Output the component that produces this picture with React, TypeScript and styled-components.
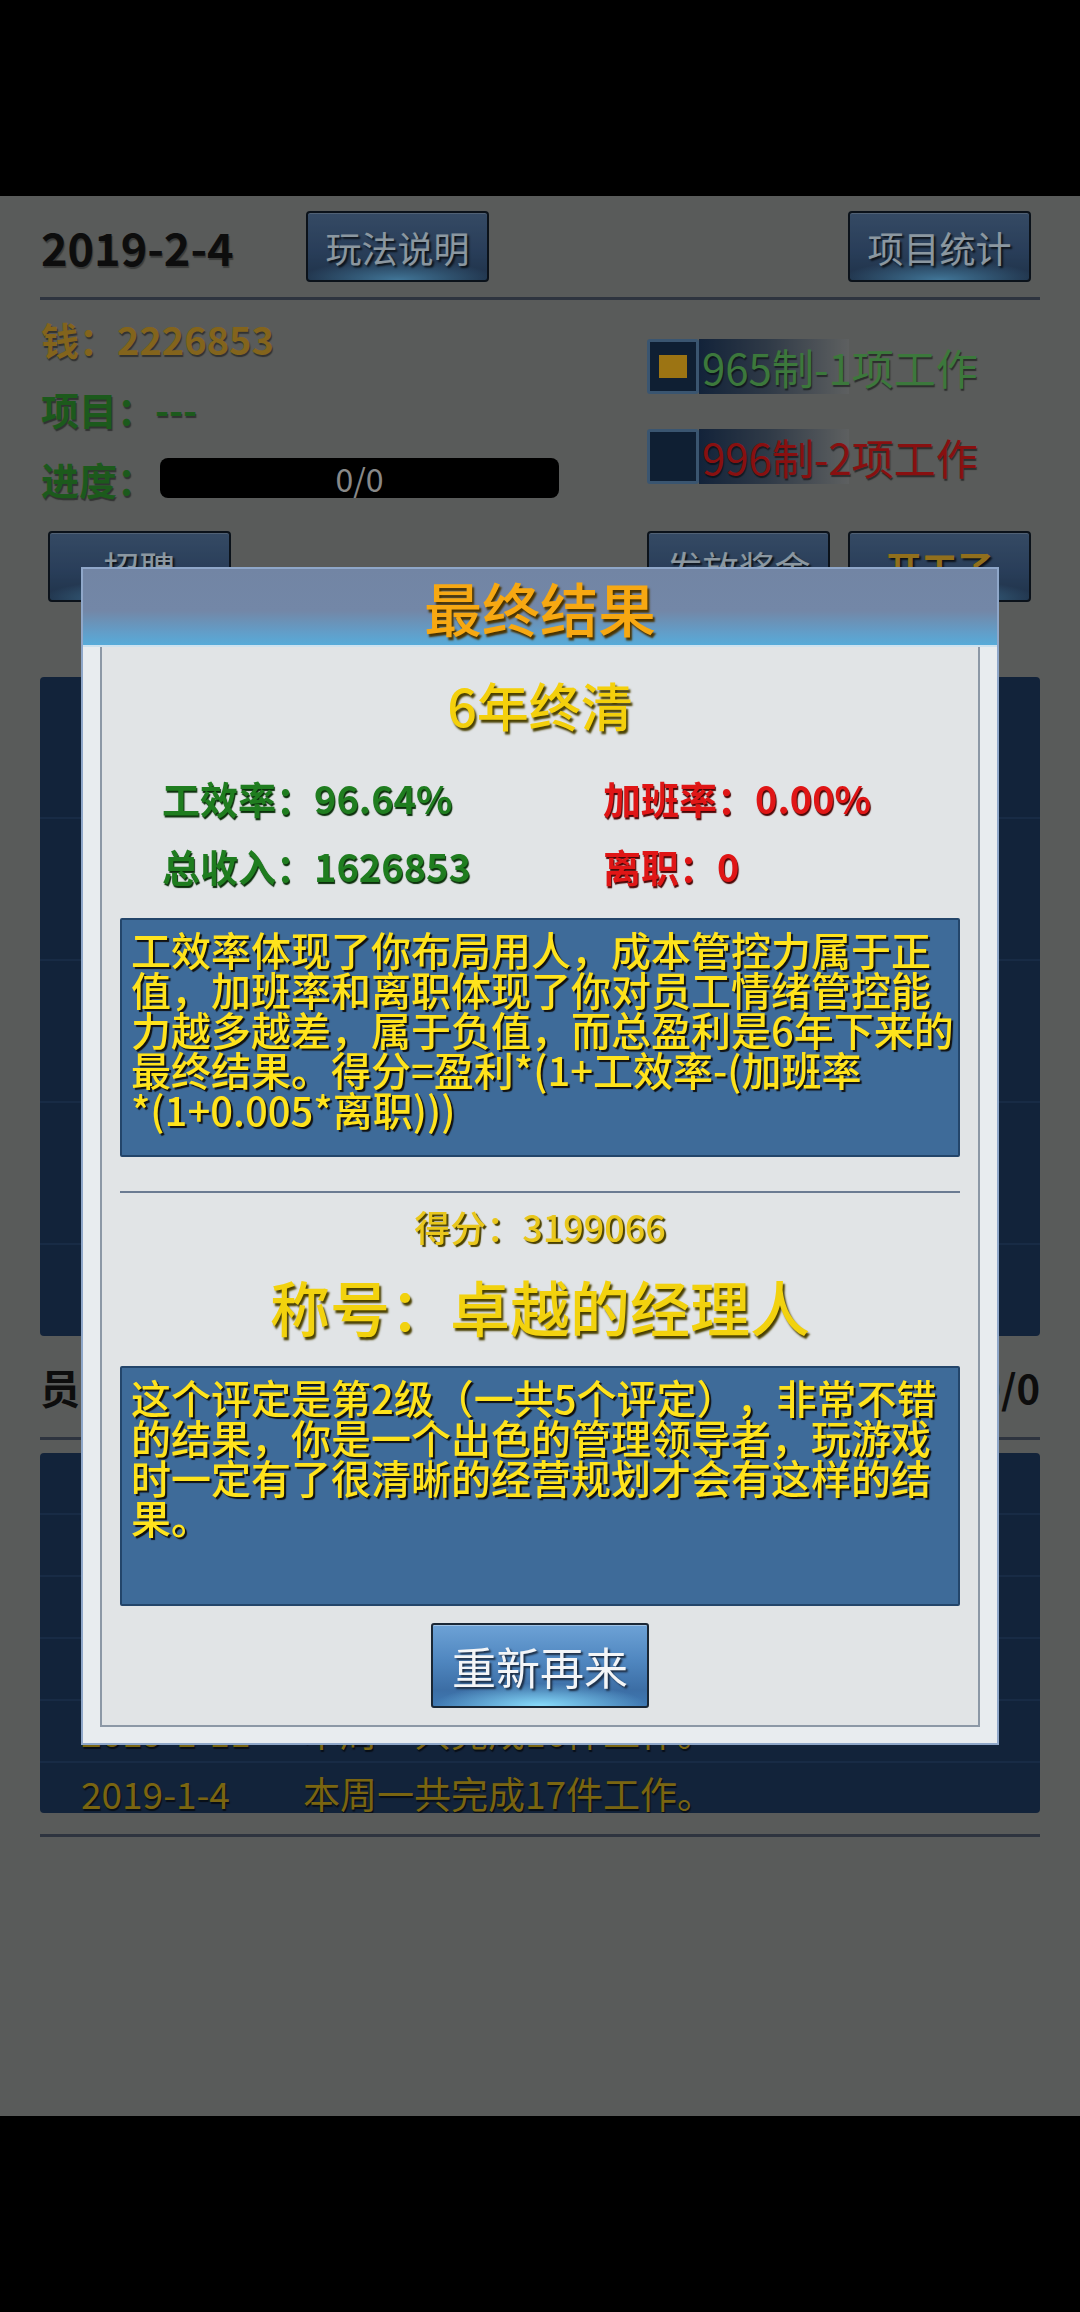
import React from 'react'
import styled, { createGlobalStyle } from 'styled-components'

const GlobalStyle = createGlobalStyle`
  html, body {
    margin: 0;
    padding: 0;
    background: #000;
  }
  body {
    font-family: "Noto Sans CJK SC", "Noto Sans", sans-serif;
  }
  * {
    box-sizing: border-box;
  }
`

const Screen = styled.div`
  width: 1080px;
  height: 2312px;
  display: flex;
  flex-direction: column;
  background: #000;
  overflow: hidden;
`

const SystemBar = styled.div<{ $h: number }>`
  flex: none;
  height: ${(p) => p.$h}px;
  background: #000;
`

const Page = styled.main`
  flex: none;
  height: 1920px;
  background: #898c8a;
  padding: 15px 40px 0;
  display: flex;
  flex-direction: column;
`

const TopRow = styled.div`
  display: grid;
  grid-template-columns: 265px 183px 1fr 183px;
  align-items: center;
  height: 71px;
  padding: 0 9px 0 1px;
`

const DateText = styled.div`
  font-size: 45px;
  font-weight: 700;
  line-height: 1;
  color: #141414;
  text-shadow: 1px 2px 1px rgba(0, 0, 0, 0.35);
`

const GameButton = styled.button<{ $gold?: boolean }>`
  width: 183px;
  height: 71px;
  padding: 0;
  border: 2px solid #121d29;
  border-radius: 4px;
  background:
    radial-gradient(ellipse 55% 30% at 50% 100%, rgba(110, 200, 255, 0.85), rgba(110, 200, 255, 0) 100%),
    linear-gradient(#52729a, #40608a 55%, #314e72);
  box-shadow: inset 0 1px 0 rgba(255, 255, 255, 0.25);
  color: ${(p) => (p.$gold ? '#dfab2b' : '#d6e8f6')};
  font-family: inherit;
  font-size: 36px;
  font-weight: ${(p) => (p.$gold ? 700 : 400)};
  line-height: 1;
  text-shadow: 2px 2px 2px rgba(0, 0, 0, 0.75);
`

const Rule = styled.hr<{ $mt?: number; $mb?: number }>`
  flex: none;
  height: 3px;
  border: 0;
  background: #475062;
  margin: ${(p) => p.$mt ?? 0}px 0 ${(p) => p.$mb ?? 0}px;
`

const Info = styled.section`
  display: flex;
  margin-top: 3px;
`

const Stats = styled.div`
  flex: 1;
  display: flex;
  flex-direction: column;
  padding-left: 1px;
`

const StatLine = styled.div<{ $color: string }>`
  height: 70px;
  display: flex;
  align-items: center;
  font-size: 38px;
  font-weight: 700;
  color: ${(p) => p.$color};
  text-shadow: 1px 2px 1px rgba(0, 0, 0, 0.45);
  white-space: nowrap;
`

const Progress = styled.div`
  width: 399px;
  height: 40px;
  margin-left: 5px;
  border-radius: 8px;
  background: #000;
  color: #d2d2d2;
  font-size: 32px;
  font-weight: 400;
  line-height: 1;
  display: flex;
  align-items: center;
  justify-content: center;
  text-shadow: none;
`

const Modes = styled.div`
  width: 393px;
  padding-top: 36px;
  display: flex;
  flex-direction: column;
  gap: 35px;
`

const Mode = styled.label`
  display: flex;
  align-items: center;
  height: 55px;
`

const Box = styled.span`
  flex: none;
  width: 52px;
  height: 55px;
  border: 3px solid #5983ac;
  border-radius: 3px;
  background: #17314f;
  display: flex;
  align-items: center;
  justify-content: center;
`

const Tick = styled.span`
  width: 28px;
  height: 23px;
  background: #f0b21e;
`

const ModeLabel = styled.span<{ $color: string }>`
  height: 55px;
  padding-left: 3px;
  display: flex;
  align-items: center;
  background: linear-gradient(90deg, #1d3659 0, rgba(29, 54, 89, 0.6) 45%, rgba(160, 165, 172, 0.3) 100%) no-repeat;
  background-size: 150px 100%;
  font-size: 42px;
  color: ${(p) => p.$color};
  text-shadow: 1px 2px 1px rgba(0, 0, 0, 0.5);
  white-space: nowrap;
`

const ActionRow = styled.div`
  display: flex;
  gap: 18px;
  margin-top: 18px;
  padding: 0 9px 0 8px;

  & > :first-child {
    margin-right: auto;
  }
`

const NavyPanel = styled.div<{ $h: number; $mt?: number }>`
  flex: none;
  height: ${(p) => p.$h}px;
  margin-top: ${(p) => p.$mt ?? 0}px;
  background: #1d3659;
  border-radius: 4px;
  overflow: hidden;
`

const PanelRow = styled.div<{ $h: number }>`
  height: ${(p) => p.$h}px;
  border-bottom: 2px solid #26426a;
  display: flex;
  align-items: center;
  padding-left: 41px;
  font-size: 37px;
  color: #bc9b19;
  text-shadow: 1px 2px 1px rgba(0, 0, 0, 0.6);
  white-space: nowrap;
`

const LogDate = styled.span`
  width: 222px;
  flex: none;
`

const SectionHead = styled.div`
  flex: none;
  height: 101px;
  display: flex;
  align-items: center;
  justify-content: space-between;
  font-size: 40px;
  font-weight: 700;
  color: #141414;
`

const Backdrop = styled.div`
  position: fixed;
  inset: 0;
  background: rgba(0, 0, 0, 0.35);
  display: flex;
  align-items: center;
  justify-content: center;
`

const Dialog = styled.div`
  width: 918px;
  height: 1178px;
  border: 2px solid #8fa7c9;
  background: #e8ecef;
  display: flex;
  flex-direction: column;
`

const DialogHead = styled.header`
  flex: none;
  height: 78px;
  border-bottom: 2px solid #cde2ef;
  background: linear-gradient(#7285a4 0, #7387a7 55%, #619fca 85%, #57abd9 100%);
  display: flex;
  align-items: center;
  justify-content: center;
  font-size: 58px;
  font-weight: 500;
  line-height: 1;
  color: #f7a812;
  text-shadow: 2px 3px 2px #4a3300;
`

const DialogBody = styled.div`
  flex: 1;
  display: flex;
  padding: 0 17px 16px;
`

const Sheet = styled.div`
  flex: 1;
  border: 2px solid #8c98a6;
  border-top: 0;
  background: #e1e4e6;
  display: flex;
  flex-direction: column;
  align-items: center;
`

const Verdict = styled.div`
  margin-top: 27px;
  font-size: 52px;
  font-weight: 500;
  line-height: 62px;
  color: #f4d00c;
  text-shadow: 2px 3px 2px #4a4000;
`

const Figures = styled.div`
  align-self: stretch;
  margin-top: 38px;
  padding-left: 60px;
  display: grid;
  grid-template-columns: 441px 1fr;
  row-gap: 20px;
`

const Figure = styled.div<{ $color: string; $shade: string }>`
  font-size: 38px;
  font-weight: 700;
  line-height: 48px;
  color: ${(p) => p.$color};
  text-shadow: 1px 2px 1px ${(p) => p.$shade};
  white-space: nowrap;
`

const Note = styled.div<{ $h: number; $mt: number }>`
  width: 840px;
  height: ${(p) => p.$h}px;
  margin-top: ${(p) => p.$mt}px;
  padding: 9px 2px 0 9px;
  border: 2px solid #23456a;
  border-radius: 2px;
  background: #3e6b99;
  font-size: 40px;
  font-weight: 500;
  line-height: 40px;
  color: #ffe31c;
  text-shadow: 2px 2px 1px #111;
  text-spacing-trim: space-all;
  line-break: strict;
`

const Formula = styled.span`
  white-space: nowrap;
`

const SheetRule = styled.div`
  width: 840px;
  height: 2px;
  margin-top: 34px;
  background: #6b7b92;
`

const Score = styled.div`
  margin-top: 11px;
  font-size: 36px;
  font-weight: 500;
  line-height: 44px;
  color: #e9c71c;
  text-shadow: 2px 2px 1px #4a4000;
`

const Rank = styled.div`
  margin-top: 22px;
  font-size: 60px;
  font-weight: 500;
  line-height: 72px;
  color: #f2d20e;
  text-shadow: 2px 3px 2px #4a4000;
`

const RetryButton = styled.button`
  flex: none;
  width: 218px;
  height: 85px;
  margin-top: 17px;
  padding: 0;
  border: 2px solid #1a2735;
  border-radius: 3px;
  background:
    radial-gradient(ellipse 50% 28% at 50% 100%, rgba(140, 225, 255, 0.95), rgba(140, 225, 255, 0) 100%),
    linear-gradient(#6da2d6, #4f86bf 45%, #3c6ea5 80%, #3f79b3);
  box-shadow: inset 0 1px 0 rgba(255, 255, 255, 0.35);
  color: #f3f5f7;
  font-family: inherit;
  font-size: 44px;
  line-height: 1;
  text-shadow: 2px 2px 2px #1c2c42;
`

const logs = [
  ['2019-2-1', '本周一共完成16件工作。'],
  ['2019-1-28', '本周一共完成18件工作。'],
  ['2019-1-21', '本周一共完成15件工作。'],
  ['2019-1-14', '本周一共完成19件工作。'],
  ['2019-1-11', '本周一共完成16件工作。'],
  ['2019-1-4', '本周一共完成17件工作。'],
]

export default function App() {
  return (
    <>
      <GlobalStyle />
      <Screen>
        <SystemBar $h={196} />
        <Page>
          <TopRow>
            <DateText>2019-2-4</DateText>
            <GameButton>玩法说明</GameButton>
            <span />
            <GameButton>项目统计</GameButton>
          </TopRow>
          <Rule $mt={15} />
          <Info>
            <Stats>
              <StatLine $color="#c99a2c">钱：2226853</StatLine>
              <StatLine $color="#2b8a2b">项目：---</StatLine>
              <StatLine $color="#2b8a2b">
                进度：<Progress>0/0</Progress>
              </StatLine>
            </Stats>
            <Modes>
              <Mode>
                <Box>
                  <Tick />
                </Box>
                <ModeLabel $color="#5cb85c">965制-1项工作</ModeLabel>
              </Mode>
              <Mode>
                <Box />
                <ModeLabel $color="#d21a1a">996制-2项工作</ModeLabel>
              </Mode>
            </Modes>
          </Info>
          <ActionRow>
            <GameButton>招聘</GameButton>
            <GameButton>发放奖金</GameButton>
            <GameButton $gold>开工了</GameButton>
          </ActionRow>
          <NavyPanel $h={659} $mt={75}>
            {[0, 1, 2, 3, 4].map((i) => (
              <PanelRow key={i} $h={142} />
            ))}
          </NavyPanel>
          <SectionHead>
            <span>员工列表</span>
            <span>0/0</span>
          </SectionHead>
          <Rule $mb={13} />
          <NavyPanel $h={360}>
            {logs.map(([d, t]) => (
              <PanelRow key={d} $h={62}>
                <LogDate>{d}</LogDate>
                {t}
              </PanelRow>
            ))}
          </NavyPanel>
          <Rule $mt={21} />
        </Page>
        <SystemBar $h={196} />
      </Screen>
      <Backdrop>
        <Dialog>
          <DialogHead>最终结果</DialogHead>
          <DialogBody>
            <Sheet>
              <Verdict>6年终清</Verdict>
              <Figures>
                <Figure $color="#1f7d1f" $shade="#0b2e0b">工效率：96.64%</Figure>
                <Figure $color="#e01616" $shade="#4a0606">加班率：0.00%</Figure>
                <Figure $color="#1f7d1f" $shade="#0b2e0b">总收入：1626853</Figure>
                <Figure $color="#e01616" $shade="#4a0606">离职：0</Figure>
              </Figures>
              <Note $h={239} $mt={28}>
                工效率体现了你布局用人，成本管控力属于正值，加班率和离职体现了你对员工情绪管控能力越多越差，属于负值，而总盈利是6年下来的最终结果。得分=盈利*(1+工效率-(加班率
                <Formula>*(1+0.005*离职)))</Formula>
              </Note>
              <SheetRule />
              <Score>得分：3199066</Score>
              <Rank>称号：卓越的经理人</Rank>
              <Note $h={240} $mt={24}>
                这个评定是第2级（一共5个评定），非常不错的结果，你是一个出色的管理领导者，玩游戏时一定有了很清晰的经营规划才会有这样的结果。
              </Note>
              <RetryButton>重新再来</RetryButton>
            </Sheet>
          </DialogBody>
        </Dialog>
      </Backdrop>
    </>
  )
}
